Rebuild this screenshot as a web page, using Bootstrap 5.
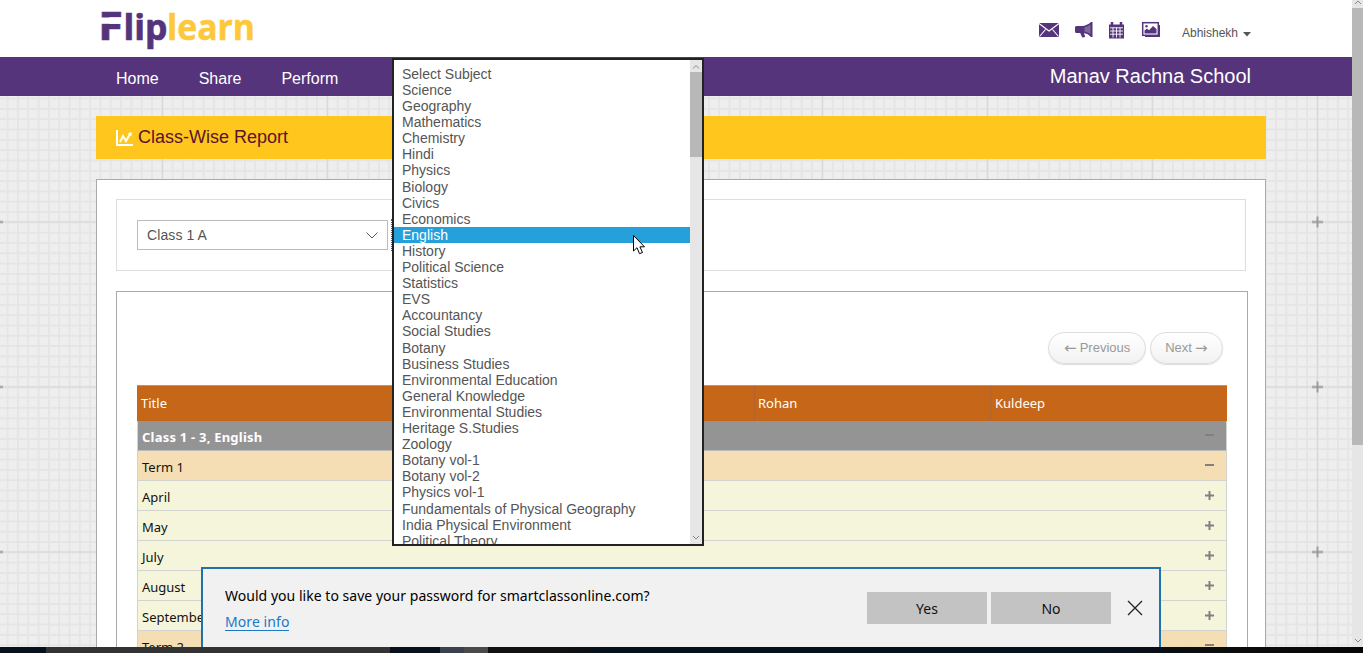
<!DOCTYPE html>
<html lang="en">
<head>
<meta charset="utf-8">
<title>Fliplearn - Class-Wise Report</title>
<meta name="viewport" content="width=device-width, initial-scale=1">
<link href="https://cdn.jsdelivr.net/npm/bootstrap@5.3.0/dist/css/bootstrap.min.css" rel="stylesheet">
<style>
html,body{height:100%;overflow:hidden}
body{font-family:"Liberation Sans",Arial,sans-serif;font-size:14px;color:#555;background:#fff}
.viewport{height:647px;position:relative}
.scroller{background-color:#eee;position:relative}
.gridpaper{position:absolute;inset:0;width:100%;height:100%}
.topbar{height:57px;padding-left:96px;padding-right:101px}
.mainnav{height:39px;background:#55347b;padding-left:116px;padding-right:101px}
.mainnav .nav-link{color:#fff;font-size:16px;line-height:39px;padding:2px 0 0;margin-right:40px}
.school{font-size:20px;color:#fff;padding-bottom:2px}
.icons{color:#55347b;margin-right:19px}
.user{font-size:12px;color:#555;margin-top:8px}
.page{margin-left:96px;width:1170px}
.banner{height:43px;background:#ffc61e;color:#5a1428;font-size:18px;margin-top:20px;padding-left:20px}
.banner span{margin-left:5px}
.panel{margin-top:20px;background:#fff;border:1px solid #aaa;height:600px;padding:19px 17px 0 19px}
.filters{border:1px solid #ddd;height:72px;width:1130px;padding:20px}
.picker{width:251px;height:30px;border:1px solid #bbb;border-radius:0;padding:0 9px;font-size:14px;letter-spacing:.1px;color:#555}
.focusring{border:1px dotted #555;width:251px;height:32px;margin:-1px 0 0 3px}
.report{border:1px solid #aaa;width:1132px;height:500px;margin-top:20px;padding:40px 20px 0}
.pill{height:32px;border:1px solid #ddd;border-radius:16px;background:linear-gradient(#fff,#f2f2f2);color:#999;font-size:13px;box-shadow:0 1px 1px #ddd;padding:0;gap:3px;width:98px}
.pill.next{width:73px}
.pill i{font-style:normal;font-family:"DejaVu Sans",sans-serif;font-size:15px;line-height:13px;width:13px}
.seg{font-family:"Noto Sans","Open Sans",sans-serif}
.tbl{margin-top:20px;width:1090px;font-size:13px;color:#111;padding-top:1px}
.thead-row{height:36px;background:#c66618;border-top:1px solid #d98c50;color:#fff}
.thead-row>div{padding:0 4px;line-height:35px;border-left:1px solid #b4632b}
.thead-row>div:nth-child(3){padding-left:3px}
.thead-row>div:first-child{border-left:0}
.trow{height:30px;border:1px solid #d3d3cf;border-top:0;background:#f5f5dc;padding:4px 12px 0 4px}
.trow.term{background:#f5deb3}
.trow.grp{background:#949494;color:#fff;font-weight:700;font-size:13px;letter-spacing:.22px;border-bottom-color:#bbb}
.sign{width:9px;height:9px;margin-top:-5px;color:#808080}
.vbar{width:11px;background:#e6e6e6}
.thumb{background:#b8b8b8}
.subjects{position:absolute;left:392px;top:58px;width:312px;height:488px;border:2px solid #222;background:#fff;overflow:hidden}
.subjects ul{padding-top:6px}
.subjects li{height:16px;line-height:16px;padding-left:8px;font-size:14px;color:#555;white-space:nowrap}
.subjects li:nth-child(10n+7){height:17px}
.subjects li.sel{background:#26a0da;color:#fff}
.sbar{width:12px;background:#e6e6e6}
.pointer{position:absolute;left:633px;top:235px}
.prompt{position:absolute;left:201px;top:567px;width:960px;height:80px;background:#f1f1f1;border:2px solid #1f72ab;border-bottom:0;color:#000;font-size:14px;padding:0 16px 0 22px}
.question{margin-top:16px;letter-spacing:.03px}
.prompt .btn{width:120px;height:32px;background:#c3c3c3;border-radius:0;border:0;font-size:14px;padding:0;color:#111}
.prompt a{color:#1b78c8;text-decoration:none;border-bottom:1px solid #1b78c8;line-height:16px;display:inline-block;margin-top:8px;letter-spacing:.08px}
.taskbar{height:6px;background:linear-gradient(90deg,#07101c 0 46px,#333 46px 390px,#07101c 390px 440px,#3a414c 440px 464px,#4a4a4a 464px 488px,#111 488px 560px,#06101a 600px 850px,#07111c 1100px,#0b0b0b 1250px,#050505)}
</style>
</head>
<body>
<div class="viewport d-flex overflow-hidden">
  <main class="scroller flex-grow-1 overflow-hidden">
    <svg class="gridpaper" aria-hidden="true">
      <defs>
        <pattern id="minor" width="10.3125" height="10.3125" patternUnits="userSpaceOnUse" x="-3.6" y="56.4"><path d="M1 0V10.4M0 1H10.4" stroke="#e5e5e5" stroke-width="1.8"/></pattern>
        <pattern id="major" width="165" height="165" patternUnits="userSpaceOnUse" x="-13" y="46.500"><path d="M10.5 0V165M0 10.5H165" stroke="#d9d9d9" stroke-width="1.5"/><path d="M10.5 5V16M5 10.5H16" stroke="#999" stroke-width="1.8"/></pattern>
      </defs>
      <rect width="100%" height="100%" fill="url(#minor)"/><rect width="100%" height="100%" fill="url(#major)"/>
    </svg>
    <header class="topbar bg-white d-flex justify-content-between align-items-center position-relative">
      <svg width="170" height="57" font-family="'Open Sans',sans-serif" font-weight="700">
        <text x="2" y="40" font-size="39" fill="#55347b" stroke="#55347b" stroke-width=".6" textLength="25" lengthAdjust="spacingAndGlyphs">F</text>
        <rect x="2" y="17.500" width="25" height="6.300" fill="#fff"/>
        <text x="27.500" y="40" font-size="36" fill="#55347b" stroke="#55347b" stroke-width=".7" textLength="44" lengthAdjust="spacingAndGlyphs">lip</text>
        <text x="71" y="40" font-size="36" fill="#fdc83c" stroke="#fdc83c" stroke-width=".5" textLength="88" lengthAdjust="spacingAndGlyphs">learn</text>
      </svg>
      <div class="d-flex align-items-center">
        <svg class="icons" width="125" height="22" viewBox="0 0 125 22" fill="currentColor">
          <rect x="1" y="5" width="20" height="14"/><path d="M1 5.5l10 7.5 10-7.5M1.500 18.500l6-7M20.500 18.500l-6-7" fill="none" stroke="#fff" stroke-width="1.100"/>
          <path d="M37 9.500q0-1.500 1.500-1.500H44q5-.3 9-4h1.500v15H53q-3-3.500-7-4l1.200 4-3 .500-2-4.500H38.500Q37 15 37 13.500z"/><path d="M46.500 9.500q3.500-.8 6-3v9.500q-3-2-6-2.600z" fill="#fff" opacity=".25"/>
          <path d="M71 6.500h15V20.500H71z"/><path d="M74 4v4M83 4v4" stroke="currentColor" stroke-width="2.500"/><path d="M72 9.800h13M72 13h13M72 16.200h13M75 9.500v10M78.500 9.500v10M82 9.500v10" stroke="#fff" stroke-width=".9"/>
          <path d="M107 7h15v12h-15z"/><rect x="104.700" y="4.700" width="15.600" height="12.600" fill="#fff" stroke="currentColor" stroke-width="1.500"/><path d="M106.500 15.500v-3l2.500-2 2 1.800 4-4.300 3.500 3v4.500z"/><circle cx="108.500" cy="8.300" r="1.200"/>
        </svg>
        <span class="user d-flex align-items-center">Abhishekh<svg width="8" height="5" style="margin:3px 0 0 5px"><path d="M0 0h8l-4 4.500z" fill="#555"/></svg></span>
      </div>
    </header>
    <nav class="mainnav d-flex justify-content-between position-relative">
      <div class="nav flex-nowrap"><a class="nav-link" href="#">Home</a><a class="nav-link" href="#">Share</a><a class="nav-link" href="#">Perform</a></div>
      <div class="school align-self-center">Manav Rachna School</div>
    </nav>
    <div class="page position-relative">
      <div class="banner d-flex align-items-center">
        <svg width="17" height="16" fill="none" stroke="#fff"><path d="M1 0V15H17" stroke-width="2"/><path d="M4 12l3-6 3 5 4-7" stroke-width="2"/><path d="M11.500 3.500l4-1.500v4.500z" fill="#fff" stroke="none"/></svg><span>Class-Wise Report</span>
      </div>
      <section class="panel">
        <div class="filters d-flex">
          <div class="picker d-flex align-items-center justify-content-between"><span>Class 1 A</span><svg width="12" height="7" fill="none" stroke="#555"><path d="M.5.5L6 6 11.500.5"/></svg></div>
          <div class="focusring"></div>
        </div>
        <div class="report">
          <div class="d-flex justify-content-end gap-1 pe-1">
            <button class="pill d-flex align-items-center justify-content-center"><i>←</i><span>Previous</span></button><button class="pill next d-flex align-items-center justify-content-center"><span>Next</span><i>→</i></button>
          </div>
          <div class="tbl seg">
            <div class="thead-row d-flex"><div style="width:381px">Title</div><div style="width:236px"></div><div style="width:236px">Rohan</div><div class="flex-grow-1">Kuldeep</div></div>
            <div class="trow grp d-flex justify-content-between align-items-center"><span>Class 1 - 3, English</span><svg class="sign"><path d="M0 4h9" stroke="currentColor" stroke-width="2"/></svg></div>
            <div class="trow term d-flex justify-content-between align-items-center"><span>Term 1</span><svg class="sign"><path d="M0 4h9" stroke="currentColor" stroke-width="2"/></svg></div>
            <div class="trow d-flex justify-content-between align-items-center"><span>April</span><svg class="sign"><path d="M0 4.500h9M4.500 0v9" stroke="currentColor" stroke-width="2"/></svg></div>
            <div class="trow d-flex justify-content-between align-items-center"><span>May</span><svg class="sign"><path d="M0 4.500h9M4.500 0v9" stroke="currentColor" stroke-width="2"/></svg></div>
            <div class="trow d-flex justify-content-between align-items-center"><span>July</span><svg class="sign"><path d="M0 4.500h9M4.500 0v9" stroke="currentColor" stroke-width="2"/></svg></div>
            <div class="trow d-flex justify-content-between align-items-center"><span>August</span><svg class="sign"><path d="M0 4.500h9M4.500 0v9" stroke="currentColor" stroke-width="2"/></svg></div>
            <div class="trow d-flex justify-content-between align-items-center"><span>September</span><svg class="sign"><path d="M0 4.500h9M4.500 0v9" stroke="currentColor" stroke-width="2"/></svg></div>
            <div class="trow term d-flex justify-content-between align-items-center"><span>Term 2</span><svg class="sign"><path d="M0 4h9" stroke="currentColor" stroke-width="2"/></svg></div>
          </div>
        </div>
      </section>
    </div>
  </main>
  <div class="vbar d-flex flex-column flex-shrink-0">
    <svg width="11" height="8" fill="none" stroke="#888"><path d="M3 4l3-3 3 3"/></svg>
    <div class="thumb" style="height:437px"></div>
    <svg class="mt-auto mb-1" width="11" height="8" fill="none" stroke="#888"><path d="M3 4l3 3 3-3"/></svg>
  </div>

  <div class="subjects d-flex">
    <ul class="list-unstyled flex-grow-1 mb-0">
      <li>Select Subject</li><li>Science</li><li>Geography</li><li>Mathematics</li><li>Chemistry</li><li>Hindi</li><li>Physics</li><li>Biology</li><li>Civics</li><li>Economics</li><li class="sel">English</li><li>History</li><li>Political Science</li><li>Statistics</li><li>EVS</li><li>Accountancy</li><li>Social Studies</li><li>Botany</li><li>Business Studies</li><li>Environmental Education</li><li>General Knowledge</li><li>Environmental Studies</li><li>Heritage S.Studies</li><li>Zoology</li><li>Botany vol-1</li><li>Botany vol-2</li><li>Physics vol-1</li><li>Fundamentals of Physical Geography</li><li>India Physical Environment</li><li>Political Theory</li>
    </ul>
    <div class="sbar d-flex flex-column flex-shrink-0">
      <svg width="12" height="12" fill="none" stroke="#888"><path d="M3 8.500l3-3 3 3"/></svg>
      <div class="thumb" style="height:85px"></div>
      <svg class="mt-auto" width="12" height="12" fill="none" stroke="#888"><path d="M3 4l3 3 3-3"/></svg>
    </div>
  </div>
  <svg class="pointer" width="13" height="20"><path d="M.5.5V16l3.500-3.300 2.500 6 3-1.200-2.600-5.700H11.500z" fill="#fff" stroke="#000"/></svg>

  <div class="prompt seg d-flex justify-content-between">
    <div><div class="question">Would you like to save your password for smartclassonline.com?</div><a href="#">More info</a></div>
    <div class="d-flex gap-1 align-items-start" style="margin-top:23px">
      <button class="btn">Yes</button><button class="btn">No</button>
      <svg width="16" height="16" style="margin:8px 0 0 12px" stroke="#222" stroke-width="1.300"><path d="M1 1l14 14M15 1L1 15"/></svg>
    </div>
  </div>
</div>
<footer class="taskbar"></footer>
<script src="https://cdn.jsdelivr.net/npm/bootstrap@5.3.0/dist/js/bootstrap.bundle.min.js"></script>
</body>
</html>
